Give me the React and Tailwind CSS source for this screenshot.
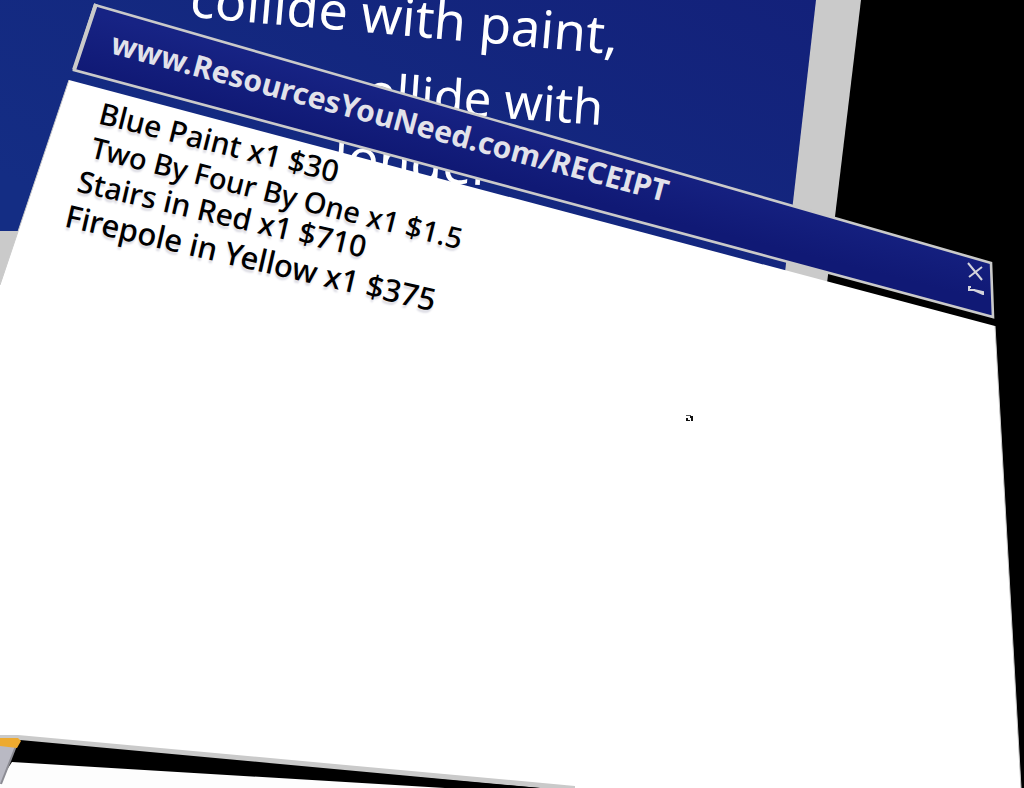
import React from "react";

const font = "font-['Noto_Sans','Open_Sans',sans-serif]";
const layer = "relative [grid-area:1/1] min-w-0 ";

function Backdrop() {
  return (
    <svg className="relative h-full min-h-screen w-full [grid-area:1/1]" viewBox="0 0 1024 788" preserveAspectRatio="none" aria-hidden="true">
      <defs>
        <linearGradient id="wall" x1="0" y1="0.6" x2="1" y2="0">
          <stop offset="0" stopColor="#142d84" />
          <stop offset="1" stopColor="#13217a" />
        </linearGradient>
      </defs>
      <rect width="1024" height="788" fill="#000" />
      <path d="M0 0H861L825 300H0Z" fill="#cacaca" />
      <path d="M0 0H816L783 290L0 231Z" fill="url(#wall)" />
      <path d="M0 231H60V300H0Z" fill="#cacaca" />
    </svg>
  );
}

function Panel() {
  return (
    <svg className="relative h-full min-h-screen w-full [grid-area:1/1]" viewBox="0 0 1024 788" preserveAspectRatio="none" aria-hidden="true">
      <defs>
        <linearGradient id="bar" gradientUnits="userSpaceOnUse" x1="540" y1="125" x2="525" y2="185">
          <stop offset="0" stopColor="#172384" />
          <stop offset="1" stopColor="#101975" />
        </linearGradient>
      </defs>
      <path d="M95 5L991 263L993 317L74 70Z" fill="url(#bar)" stroke="#cacaca" strokeWidth="2.6" />
      <path d="M96 4L74 70" stroke="#cacaca" strokeWidth="4" />
      <path d="M69 80L995 326L1021 788H575L0 736V285Z" fill="#fff" />
      <path d="M69 80L0 285" stroke="#cacaca" strokeWidth="1" />
      <path d="M995 326L1021 788" stroke="#cacaca" strokeWidth="1" />
      <path d="M0 735L18 735L575 786V788H540L0 741Z" fill="#cacaca" />
      <path d="M20 740L540 788H445L12 762Z" fill="#000" />
      <path d="M12 762L445 788H0V780Z" fill="#fdfdfd" />
      <path d="M0 746H16L1 784H0Z" fill="#b9b9c3" />
      <path d="M16 746L1 784" stroke="#8c8c94" strokeWidth="2" />
      <path d="M0 738H18L21 741L17 748L0 746Z" fill="#edaa30" />
      <path d="M686 415H691V416H686Z" fill="#555" />
      <path d="M690 416H693V421H691V418H690ZM686 418H688V420H690V421H686Z" fill="#111" />
    </svg>
  );
}

const line = "w-max origin-top-left whitespace-nowrap ";

export default function App() {
  return (
    <main className={"grid min-h-screen w-full overflow-hidden bg-black " + font}>
      <Backdrop />
      <section className={layer + "isolate -mt-[29px] flex flex-col gap-[15px] pl-[193px] leading-[52px] text-white"}>
        <p className={line + "mb-[24px] rotate-[5deg] text-[52px]"}>collide with paint,</p>
        <p className={line + "ml-[152px] rotate-[4deg] text-[49px]"}>collide with</p>
        <p className={line + "ml-[143px] rotate-[4deg] text-[52px]"}>longer</p>
      </section>
      <Panel />
      <header className={layer + "flex items-start justify-between pt-[28px] pr-[38px] pl-[116px]"}>
        <h1 className="w-max origin-top-left rotate-[15deg] text-[30px] leading-[30px] font-bold whitespace-nowrap text-[#e2e2ea]">
          www.ResourcesYouNeed.com/RECEIPT
        </h1>
        <div className="flex flex-col gap-[2px] pt-[233px]">
          <button type="button" aria-label="Close" className="h-5 w-5">
            <svg viewBox="0 0 20 20" className="h-5 w-5" fill="none" stroke="#d4d4dc" strokeWidth="2">
              <path d="M2 2L16 19M16 6L3 16" />
            </svg>
          </button>
          <button type="button" aria-label="Minimize" className="h-4 w-5">
            <svg viewBox="0 0 20 16" className="h-4 w-5" fill="none" stroke="#d4d4dc" strokeWidth="2">
              <path d="M5 4H3V7L8 7L17 9V12M8 7L17 11" />
            </svg>
          </button>
        </div>
      </header>
      <ul className={layer + "flex h-max flex-col pt-[96px] pl-[70px] text-[30px] leading-[34px] font-medium text-black [text-shadow:0px_3px_2px_#dcdce4]"}>
        <li className={line + "ml-[34px] rotate-[14deg] text-[30px]"}>Blue Paint x1 $30</li>
        <li className={line + "ml-[26px] rotate-[14deg] text-[29px]"}>Two By Four By One x1 $1.5</li>
        <li className={line + "ml-3 rotate-[13deg] text-[30px]"}>Stairs in Red x1 $710</li>
        <li className={line + "rotate-[13deg] text-[31px]"}>Firepole in Yellow x1 $375</li>
      </ul>
    </main>
  );
}
